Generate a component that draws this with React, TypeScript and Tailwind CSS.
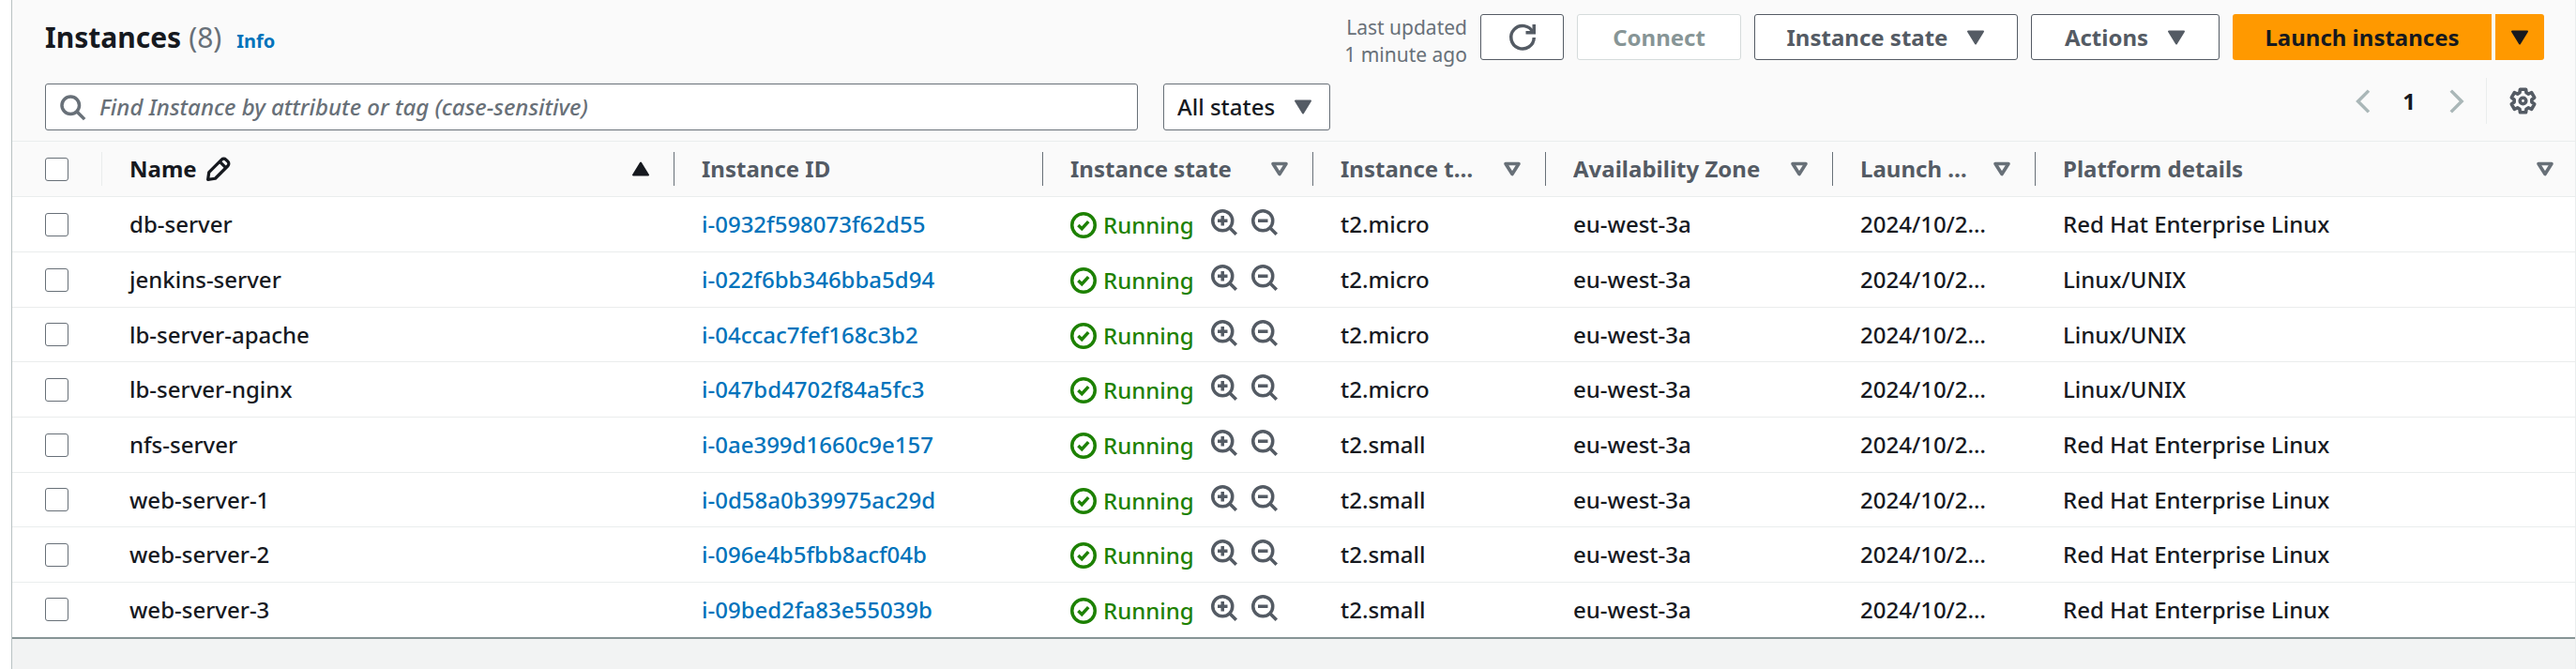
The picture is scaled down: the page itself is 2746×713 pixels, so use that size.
import React from "react";

type Instance = { name: string; id: string; type: string; platform: string };

const RHEL = "Red Hat Enterprise Linux";

const instances: Instance[] = [
  { name: "db-server", id: "i-0932f598073f62d55", type: "t2.micro", platform: RHEL },
  { name: "jenkins-server", id: "i-022f6bb346bba5d94", type: "t2.micro", platform: "Linux/UNIX" },
  { name: "lb-server-apache", id: "i-04ccac7fef168c3b2", type: "t2.micro", platform: "Linux/UNIX" },
  { name: "lb-server-nginx", id: "i-047bd4702f84a5fc3", type: "t2.micro", platform: "Linux/UNIX" },
  { name: "nfs-server", id: "i-0ae399d1660c9e157", type: "t2.small", platform: RHEL },
  { name: "web-server-1", id: "i-0d58a0b39975ac29d", type: "t2.small", platform: RHEL },
  { name: "web-server-2", id: "i-096e4b5fbb8acf04b", type: "t2.small", platform: RHEL },
  { name: "web-server-3", id: "i-09bed2fa83e55039b", type: "t2.small", platform: RHEL },
];

function Svg({ className, children }: { className: string; children: React.ReactNode }) {
  return (
    <svg viewBox="0 0 16 16" fill="none" stroke="currentColor" strokeWidth="2" aria-hidden="true" className={`shrink-0 overflow-visible ${className}`}>
      {children}
    </svg>
  );
}

const CaretDown = ({ className = "" }: { className?: string }) => (
  <svg viewBox="0 0 20 16" aria-hidden="true" className={`h-4 w-5 shrink-0 ${className}`}>
    <path d="M2 1.5h16L10 14.5z" fill="currentColor" stroke="currentColor" strokeWidth="2" strokeLinejoin="round" />
  </svg>
);

const CaretUp = () => (
  <svg viewBox="0 0 20 16" aria-hidden="true" className="h-4 w-5 shrink-0">
    <path d="M2 14.5h16L10 1.5z" fill="currentColor" stroke="currentColor" strokeWidth="2" strokeLinejoin="round" />
  </svg>
);

const CaretHollow = () => (
  <svg viewBox="0 0 20 16" aria-hidden="true" className="h-4 w-5 shrink-0 text-[#687078]">
    <path d="M3 2.500h14L10 13.500z" fill="none" stroke="currentColor" strokeWidth="3.6" strokeLinejoin="round" />
  </svg>
);

function Checkbox({ label }: { label: string }) {
  return (
    <input
      type="checkbox"
      aria-label={label}
      className="block size-[25px] appearance-none rounded-[3px] border border-[#687078] bg-white checked:bg-[#0073bb]"
    />
  );
}

function Button({ children, className = "", label }: { children: React.ReactNode; className?: string; label?: string }) {
  return (
    <button
      type="button"
      aria-label={label}
      className={`flex h-[49px] items-center justify-center gap-5 rounded-[3px] border border-[#545b64] bg-white text-2xl font-bold text-[#545b64] ${className}`}
    >
      {children}
    </button>
  );
}

type HeadProps = { children: React.ReactNode; icon?: React.ReactNode; last?: boolean };

function Head({ children, icon, last }: HeadProps) {
  return (
    <th scope="col" className="p-0 text-left font-bold">
      <div className={`flex h-9 items-center justify-between pl-[29px] ${last ? "pr-[22px]" : "border-r border-[#687078] pr-[25px]"}`}>
        <span className="min-w-0 truncate">{children}</span>
        {icon}
      </div>
    </th>
  );
}

function Row({ item }: { item: Instance }) {
  return (
    <tr className="h-[59px] border-b border-[#eaeded] last:border-b-2 last:border-[#879596] nth-[3n]:h-[58px]">
      <td className="p-0 pl-[35px]">
        <Checkbox label={`Select ${item.name}`} />
      </td>
      <td className="truncate p-0 pl-[29px]">{item.name}</td>
      <td className="truncate p-0 pl-[29px]">
        <a href="#" className="text-[#0073bb]">{item.id}</a>
      </td>
      <td className="p-0 pl-[29px]">
        <div className="flex items-center">
          <span className="flex items-center gap-[7px] pt-[2px] text-[#1d8102]">
            <Svg className="size-7">
              <circle cx="8" cy="8" r="7" />
              <path d="m4.800 8 2.200 2.100L11 5.800" />
            </Svg>
            Running
          </span>
          <button type="button" aria-label="Filter in" className="ml-[18px] text-[#545b64]">
            <Svg className="mb-1 size-7">
              <circle cx="7" cy="7" r="6" />
              <path d="m11.300 11.300 4 4M4 7h6M7 4v6" />
            </Svg>
          </button>
          <button type="button" aria-label="Filter out" className="ml-[15px] text-[#545b64]">
            <Svg className="mb-1 size-7">
              <circle cx="7" cy="7" r="6" />
              <path d="m11.300 11.300 4 4M4 7h6" />
            </Svg>
          </button>
        </div>
      </td>
      <td className="truncate p-0 pl-[29px]">{item.type}</td>
      <td className="truncate p-0 pl-[29px]">eu-west-3a</td>
      <td className="p-0 pl-[29px]">2024/10/2…</td>
      <td className="truncate p-0 pl-[29px]">{item.platform}</td>
    </tr>
  );
}

export default function App() {
  return (
    <div className="flex min-h-screen flex-col bg-white pl-3 font-['Noto_Sans',sans-serif] text-2xl font-medium text-[#16191f]">
      <main className="flex grow flex-col border-x border-l-[#b9c2c3] border-r-[#eaeded] bg-[#f2f3f3]">
        <header className="bg-[#fafafa] pr-[33px] pl-[35px]">
          <div className="flex items-start justify-between pt-[15px]">
            <h1 className="flex items-baseline text-[30px] leading-[49px] font-bold">
              Instances
              <span className="ml-2 font-normal text-[#687078]">(8)</span>
              <a href="#" className="ml-4 text-xl text-[#0073bb]">Info</a>
            </h1>
            <div className="flex gap-[14px]">
              <p className="text-right text-[21px] leading-[29px] font-normal text-[#687078]">
                Last updated
                <br />1 minute ago
              </p>
              <Button label="Refresh" className="w-[89px]">
                <Svg className="size-7">
                  <path d="M10 5h5V0" />
                  <path d="M15 8a7 7 0 1 1-.700-3.200" />
                </Svg>
              </Button>
              <button type="button" disabled className="h-[49px] w-[175px] rounded-[3px] border border-[#d5dbdb] bg-white font-bold text-[#879596]">
                Connect
              </button>
              <Button className="w-[281px]">Instance state <CaretDown /></Button>
              <Button className="w-[201px]">Actions <CaretDown /></Button>
              <div className="flex gap-1">
                <button type="button" className="h-[49px] w-[276px] rounded-l-[3px] bg-[#ff9900] font-bold">Launch instances</button>
                <button type="button" aria-label="More launch options" className="flex h-[49px] w-[52px] items-center justify-center rounded-r-[3px] bg-[#ff9900]">
                  <CaretDown />
                </button>
              </div>
            </div>
          </div>

          <div className="flex items-start justify-between pt-[10px] pb-[11px]">
            <div className="mt-[6px] flex grow gap-[27px]">
              <label className="flex h-[50px] max-w-[1165px] grow items-center gap-[15px] rounded-[3px] border border-[#687078] bg-white px-[14px]">
                <Svg className="size-7 text-[#687078]">
                  <circle cx="7" cy="7" r="5.300" />
                  <path d="m11 11 4.500 4.500" />
                </Svg>
                <input
                  type="text"
                  aria-label="Find Instance"
                  placeholder="Find Instance by attribute or tag (case-sensitive)"
                  className="min-w-0 grow bg-transparent outline-none placeholder:text-[#687078] placeholder:italic"
                />
              </label>
              <div className="relative">
                <select aria-label="Instance states" className="h-[50px] w-[178px] appearance-none rounded-[3px] border border-[#687078] bg-white pl-[14px]">
                  <option>All states</option>
                </select>
                <CaretDown className="pointer-events-none absolute top-[17px] right-[19px] text-[#545b64]" />
              </div>
            </div>
            <nav aria-label="Pagination" className="flex h-[49px] items-center">
              <button type="button" aria-label="Previous page" className="text-[#aab7b8]">
                <Svg className="size-7"><path d="M12 1.500 5.500 8l6.500 6.500" /></Svg>
              </button>
              <button type="button" className="w-[72px] font-bold">1</button>
              <button type="button" aria-label="Next page" className="text-[#aab7b8]">
                <Svg className="size-7"><path d="M5 1.500 11.500 8 5 14.500" /></Svg>
              </button>
              <button type="button" aria-label="Preferences" className="ml-[18px] flex h-full items-center border-l border-[#eaeded] pr-2 pl-6 text-[#545b64]">
                <Svg className="size-[29px]">
                  <path
                    strokeLinejoin="round"
                    d="M6.310 1.210h3.380L9.950 3.180 11.200 3.900l1.840-.760 1.690 2.930-1.580 1.210v1.440l1.580 1.210-1.690 2.930-1.840-.760-1.250.720-.260 1.970H6.310l-.260-1.970-1.250-.720-1.840.760-1.690-2.930 1.580-1.210V7.280L1.270 6.070l1.690-2.930 1.840.760 1.250-.720z"
                  />
                  <circle cx="8" cy="8" r="1.800" />
                </Svg>
              </button>
            </nav>
          </div>
        </header>

        <table className="w-full table-fixed border-collapse bg-white">
          <colgroup>
            <col className="w-[96px]" />
            <col className="w-[610px]" />
            <col className="w-[393px]" />
            <col className="w-[288px]" />
            <col className="w-[248px]" />
            <col className="w-[306px]" />
            <col className="w-[216px]" />
            <col />
          </colgroup>
          <thead>
            <tr className="h-[59px] border-y border-[#eaeded] bg-[#fafafa] text-[#545b64]">
              <th scope="col" className="p-0">
                <div className="flex h-9 items-center border-r border-[#eaeded] pl-[35px]">
                  <Checkbox label="Select all instances" />
                </div>
              </th>
              <Head icon={<span className="text-[#16191f]"><CaretUp /></span>}>
                <span className="flex items-center gap-[10px] text-[#16191f]">
                  Name
                  <Svg className="size-[26px]">
                    <path d="M1 15l.700-4.800 8.300-8.300a2 2 0 0 1 2.800 0l1.300 1.300a2 2 0 0 1 0 2.800L5.800 14.300z" strokeLinejoin="round" />
                    <path d="m9 3.500 3.500 3.500" />
                  </Svg>
                </span>
              </Head>
              <Head>Instance ID</Head>
              <Head icon={<CaretHollow />}>Instance state</Head>
              <Head icon={<CaretHollow />}>Instance t…</Head>
              <Head icon={<CaretHollow />}>Availability Zone</Head>
              <Head icon={<CaretHollow />}>Launch …</Head>
              <Head icon={<CaretHollow />} last>Platform details</Head>
            </tr>
          </thead>
          <tbody>
            {instances.map((item) => (
              <Row key={item.id} item={item} />
            ))}
          </tbody>
        </table>
      </main>
    </div>
  );
}
